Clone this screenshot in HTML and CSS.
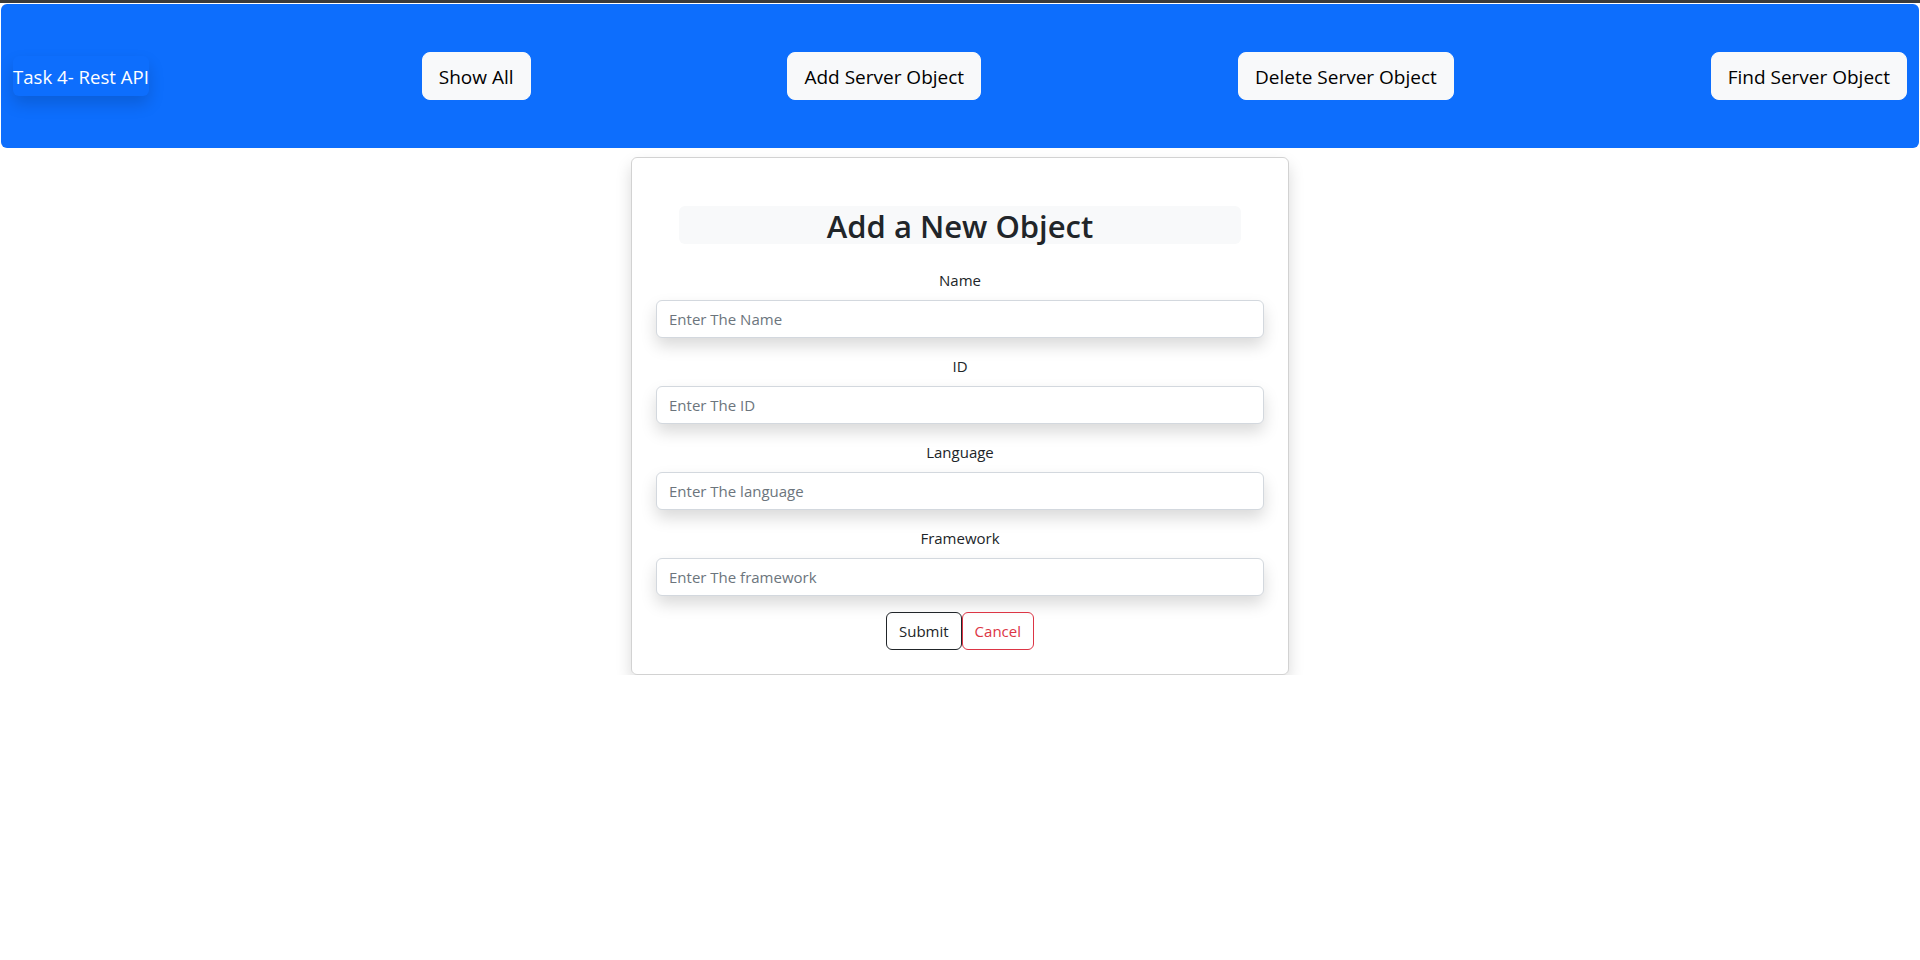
FILE: index.html
```html
<!DOCTYPE html>
<html lang="en">
<head>
<meta charset="utf-8">
<title>Task 4- Rest API</title>
<link rel="stylesheet" href="styles.css">
</head>
<body>
<div class="topline"></div>
<nav class="navbar">
  <a class="brand" href="#">Task 4- Rest API</a>
  <button class="nav-btn" type="button">Show All</button>
  <button class="nav-btn" type="button">Add Server Object</button>
  <button class="nav-btn" type="button">Delete Server Object</button>
  <button class="nav-btn" type="button">Find Server Object</button>
</nav>
<main class="wrap">
  <section class="card">
    <h2 class="title">Add a New Object</h2>
    <form class="form">
      <div class="field">
        <label class="label" for="name">Name</label>
        <input class="input" id="name" type="text" placeholder="Enter The Name">
      </div>
      <div class="field">
        <label class="label" for="id">ID</label>
        <input class="input" id="id" type="text" placeholder="Enter The ID">
      </div>
      <div class="field">
        <label class="label" for="language">Language</label>
        <input class="input" id="language" type="text" placeholder="Enter The language">
      </div>
      <div class="field">
        <label class="label" for="framework">Framework</label>
        <input class="input" id="framework" type="text" placeholder="Enter The framework">
      </div>
      <div class="actions"><button class="btn btn-dark" type="submit">Submit</button><button class="btn btn-danger" type="button">Cancel</button></div>
    </form>
  </section>
</main>
</body>
</html>
```
FILE: styles.css
```css
* { box-sizing: border-box; }

body {
  margin: 0;
  background: #fff;
  font-family: "Open Sans", "Noto Sans", "Liberation Sans", sans-serif;
  color: #212529;
}

.topline {
  height: 3px;
  background: #3b3b3b;
}

.navbar {
  margin: 1px 1px 0;
  height: 144px;
  background: #0d6efd;
  border-radius: 6px;
  display: flex;
  justify-content: space-between;
  align-items: center;
  padding: 0 12px;
}

.brand {
  color: #fff;
  text-decoration: none;
  font-size: 18.6px;
  line-height: 30px;
  padding: 6px 0 4px;
  margin-right: 16px;
  border-radius: 6px;
  box-shadow: 0 8px 16px rgba(0, 0, 0, 0.15);
  white-space: nowrap;
}

.nav-btn {
  font-family: inherit;
  font-size: 19px;
  line-height: 30px;
  padding: 9px 16px 7px;
  border: 1px solid #f8f9fa;
  background: #f8f9fa;
  color: #000;
  border-radius: 8px;
  white-space: nowrap;
}

.wrap {
  display: flex;
  justify-content: center;
  padding-top: 9px;
}

.card {
  width: 658px;
  border: 1px solid rgba(0, 0, 0, 0.175);
  border-radius: 6px;
  padding: 24px;
  box-shadow: 0 8px 16px rgba(0, 0, 0, 0.15);
  text-align: center;
}

.title {
  margin: 24px 23px;
  padding-top: 2px;
  background: #f8f9fa;
  border-radius: 6px;
  font-size: 31px;
  line-height: 36px;
  font-weight: 600;
  color: #212529;
}

.form { margin: 0; }

.field { margin-bottom: 16px; }

.label {
  display: block;
  font-size: 15px;
  line-height: 24px;
  margin-bottom: 8px;
  color: #212529;
}

.input {
  display: block;
  width: 100%;
  height: 38px;
  padding: 6px 12px;
  font-family: inherit;
  font-size: 15px;
  color: #212529;
  background: #fff;
  border: 1px solid #d3d8de;
  border-radius: 6px;
  box-shadow: 0 8px 16px rgba(0, 0, 0, 0.15);
  outline: none;
}

.input::placeholder { color: #6c757d; }

.actions {
  display: flex;
  justify-content: center;
}

.btn {
  font-family: inherit;
  font-size: 15px;
  line-height: 24px;
  padding: 6px 12px;
  background: transparent;
  border: 1px solid;
  border-radius: 6px;
}

.btn-dark { color: #212529; border-color: #212529; }
.btn-danger { color: #dc3545; border-color: #dc3545; }
```
